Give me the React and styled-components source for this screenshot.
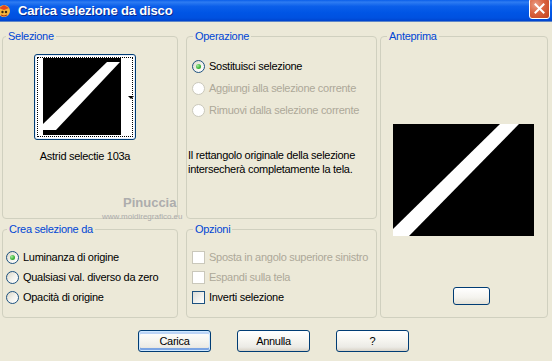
import React from 'react';
import styled, { createGlobalStyle } from 'styled-components';

const GlobalStyle = createGlobalStyle`
  html, body {
    margin: 0;
    padding: 0;
    background: #ECE9D8;
  }
  body {
    font-family: "Liberation Sans", Arial, sans-serif;
    font-size: 11px;
    letter-spacing: -0.28px;
    color: #000;
  }
`;

const Window = styled.div`
  width: 552px;
  height: 361px;
  overflow: hidden;
  background: #ECE9D8;
  display: flex;
  flex-direction: column;
`;

const TitleBar = styled.div`
  height: 21px;
  flex: none;
  display: flex;
  align-items: center;
  padding-right: 2px;
  background: linear-gradient(to bottom, #0A5EE9 0%, #2E7CF2 10%, #0B5FEA 30%, #0055E5 60%, #0051E0 85%, #0044CD 100%);
  border-bottom: 1px solid #5E86C8;
`;

const AppIcon = styled.svg`
  width: 14px;
  height: 14px;
  margin-left: -2px;
  flex: none;
`;

const Title = styled.span`
  margin-left: 6px;
  color: #fff;
  font-weight: bold;
  font-size: 13px;
  letter-spacing: -0.15px;
  text-shadow: 1px 1px 0 #0A2A8E;
  flex: 1;
`;

const CloseBox = styled.div`
  width: 21px;
  height: 21px;
  box-sizing: border-box;
  align-self: flex-start;
  margin-top: -2px;
  border: 1px solid #fff;
  border-radius: 3px;
  background: radial-gradient(circle at 30% 30%, #EA9C84 0%, #D9623F 45%, #C2401C 100%);
  display: flex;
  align-items: center;
  justify-content: center;
`;

const Body = styled.div`
  display: grid;
  grid-template-columns: 176px 8px 191px 3px 168px;
  grid-template-rows: 189px 95px;
  row-gap: 4px;
  grid-template-areas:
    "sel . op . ant"
    "crea . opz . ant";
  padding: 8px 0 0 2px;
`;

const Group = styled.fieldset`
  grid-area: ${p => p.$area};
  position: relative;
  margin: 0;
  padding: 0;
  min-width: 0;
  border: 1px solid #D0D0BF;
  border-radius: 4px;
  box-sizing: border-box;
`;

const Legend = styled.legend`
  margin-left: ${p => p.$inset}px;
  padding: 0 2px;
  line-height: 12px;
  font-size: 11px;
  color: #0046D5;
`;

const Stack = styled.div`
  display: flex;
  flex-direction: column;
  align-items: flex-start;
  padding: ${p => p.$pad};
`;

const ThumbColumn = styled.div`
  width: 102px;
  display: flex;
  flex-direction: column;
  align-items: center;
  gap: 9px;
`;

const ThumbButton = styled.div`
  width: 102px;
  height: 86px;
  box-sizing: border-box;
  border: 1px solid #003C74;
  border-radius: 3px;
  padding: 2px;
  background: #fff;
  box-shadow: inset 0 0 0 1px #E3ECF9;
`;

const FocusRing = styled.div`
  height: 100%;
  box-sizing: border-box;
  border: 1px dotted #000;
  display: flex;
  align-items: stretch;
  padding-left: 5px;
`;

const DropArrow = styled.div`
  margin-left: auto;
  margin-right: -2px;
  align-self: center;
  width: 0;
  height: 0;
  border-left: 3px solid transparent;
  border-right: 3px solid transparent;
  border-top: 3px solid #000;
`;

const Caption = styled.div`
  line-height: 14px;
  white-space: nowrap;
`;

const Watermark = styled.div`
  position: absolute;
  left: ${p => p.$left}px;
  top: ${p => p.$top}px;
  font-size: ${p => p.$size}px;
  font-weight: ${p => p.$weight};
  letter-spacing: 0;
  line-height: 1.15;
  color: ${p => p.$color};
  white-space: nowrap;
`;

const OptionRow = styled.div`
  display: flex;
  align-items: center;
  gap: 4px;
  height: ${p => p.$h}px;
  color: ${p => (p.$disabled ? '#ACA899' : '#000')};
  white-space: nowrap;
`;

const RadioDot = styled.span`
  width: 13px;
  height: 13px;
  box-sizing: border-box;
  flex: none;
  border-radius: 50%;
  border: 1px solid ${p => (p.$disabled ? '#CAC8BB' : '#1C5180')};
  background: ${p => (p.$disabled ? '#fff' : 'linear-gradient(135deg, #DCD8C8 0%, #F4F3EE 55%, #fff 100%)')};
  display: flex;
  align-items: center;
  justify-content: center;
  &::after {
    content: '';
    display: ${p => (p.$checked ? 'block' : 'none')};
    width: 5px;
    height: 5px;
    border-radius: 50%;
    background: radial-gradient(circle at 35% 35%, #A4EB9F 0%, #3FB63B 55%, #1E911D 100%);
  }
`;

const CheckBox = styled.span`
  width: 13px;
  height: 13px;
  box-sizing: border-box;
  flex: none;
  border: 1px solid ${p => (p.$disabled ? '#CAC8BB' : '#1C5180')};
  background: ${p => (p.$disabled ? '#fff' : 'linear-gradient(135deg, #DCDCD7 0%, #F2F2EF 60%, #fff 100%)')};
`;

const Note = styled.p`
  margin: 27px 0 0 -4px;
  line-height: 14px;
`;

const Preview = styled.svg`
  display: block;
  width: 141px;
  height: 112px;
`;

const SmallButton = styled.div`
  width: 37px;
  height: 18px;
  box-sizing: border-box;
  border: 1px solid #003C74;
  border-radius: 3px;
  background: linear-gradient(to bottom, #fff 0%, #F4F3EE 60%, #E4E1D6 100%);
  margin: 51px 0 0 60px;
`;

const ButtonRow = styled.div`
  display: flex;
  gap: 26px;
  padding-left: 138px;
  margin-top: 12px;
`;

const PushButton = styled.div`
  width: 73px;
  height: 22px;
  box-sizing: border-box;
  border: 1px solid #003C74;
  border-radius: 3px;
  background: linear-gradient(to bottom, #FFFFFF 0%, #F5F4EF 50%, #ECEBE6 80%, #D8D2C6 100%);
  box-shadow: ${p => (p.$default ? 'inset 0 0 0 1px #CEE7FF, inset 0 -2px 0 1px #7BA4E3, inset 0 2px 0 1px #BCD4F6' : 'none')};
  display: flex;
  align-items: center;
  justify-content: center;
  font-size: 11px;
`;

function Radio({ label, checked, disabled, h }) {
  return (
    <OptionRow $h={h} $disabled={disabled}>
      <RadioDot $checked={checked} $disabled={disabled} />
      {label}
    </OptionRow>
  );
}

function Check({ label, disabled }) {
  return (
    <OptionRow $h={20} $disabled={disabled}>
      <CheckBox $disabled={disabled} />
      {label}
    </OptionRow>
  );
}

export default function App() {
  return (
    <Window>
      <GlobalStyle />
      <TitleBar>
        <AppIcon viewBox="0 0 14 14">
          <circle cx="6" cy="7" r="6" fill="#F6B73C" />
          <path d="M1 4 L6 1 L11 4 L6 6 Z" fill="#E2461E" />
          <circle cx="4.5" cy="8" r="1.2" fill="#3A2A12" />
          <circle cx="8" cy="8" r="1.2" fill="#3A2A12" />
          <path d="M3 11 Q6 13 9 11" stroke="#B0301A" strokeWidth="1" fill="none" />
        </AppIcon>
        <Title>Carica selezione da disco</Title>
        <CloseBox>
          <svg width="11" height="11" viewBox="0 0 11 11">
            <path d="M1.5 1.5 L9.5 9.5 M9.5 1.5 L1.5 9.5" stroke="#fff" strokeWidth="2" strokeLinecap="square" />
          </svg>
        </CloseBox>
      </TitleBar>

      <Body>
        <Group $area="sel">
          <Legend $inset={3}>Selezione</Legend>
          <Stack $pad="12px 0 0 31px">
            <ThumbColumn>
              <ThumbButton>
                <FocusRing>
                  <svg width="78" height="77" viewBox="0 0 78 77">
                    <rect width="78" height="77" fill="#000" />
                    <polygon points="64,4 77,4 13,72 0,72 0,66" fill="#fff" />
                  </svg>
                  <DropArrow />
                </FocusRing>
              </ThumbButton>
              <Caption>Astrid selectie 103a</Caption>
            </ThumbColumn>
          </Stack>
          <Watermark $left={120} $top={154} $size={13} $weight="bold" $color="#ADADAD">Pinuccia</Watermark>
          <Watermark $left={99} $top={170} $size={8} $weight="normal" $color="#ABABAB">www.moidiregrafico.eu</Watermark>
        </Group>

        <Group $area="op">
          <Legend $inset={6}>Operazione</Legend>
          <Stack $pad="13px 0 0 5px">
            <Radio h={22} checked label="Sostituisci selezione" />
            <Radio h={22} disabled label="Aggiungi alla selezione corrente" />
            <Radio h={22} disabled label="Rimuovi dalla selezione corrente" />
            <Note>
              Il rettangolo originale della selezione
              <br />
              intersecherà completamente la tela.
            </Note>
          </Stack>
        </Group>

        <Group $area="ant">
          <Legend $inset={6}>Anteprima</Legend>
          <Stack $pad="82px 0 0 12px">
            <Preview viewBox="0 0 141 112">
              <rect width="141" height="112" fill="#000" />
              <polygon points="107,0 126,0 16,112 0,112 0,105" fill="#fff" />
            </Preview>
            <SmallButton />
          </Stack>
        </Group>

        <Group $area="crea">
          <Legend $inset={4}>Crea selezione da</Legend>
          <Stack $pad="12px 0 0 3px">
            <Radio h={20} checked label="Luminanza di origine" />
            <Radio h={20} label="Qualsiasi val. diverso da zero" />
            <Radio h={20} label="Opacità di origine" />
          </Stack>
        </Group>

        <Group $area="opz">
          <Legend $inset={6}>Opzioni</Legend>
          <Stack $pad="12px 0 0 5px">
            <Check disabled label="Sposta in angolo superiore sinistro" />
            <Check disabled label="Espandi sulla tela" />
            <Check label="Inverti selezione" />
          </Stack>
        </Group>
      </Body>

      <ButtonRow>
        <PushButton $default>Carica</PushButton>
        <PushButton>Annulla</PushButton>
        <PushButton>?</PushButton>
      </ButtonRow>
    </Window>
  );
}
